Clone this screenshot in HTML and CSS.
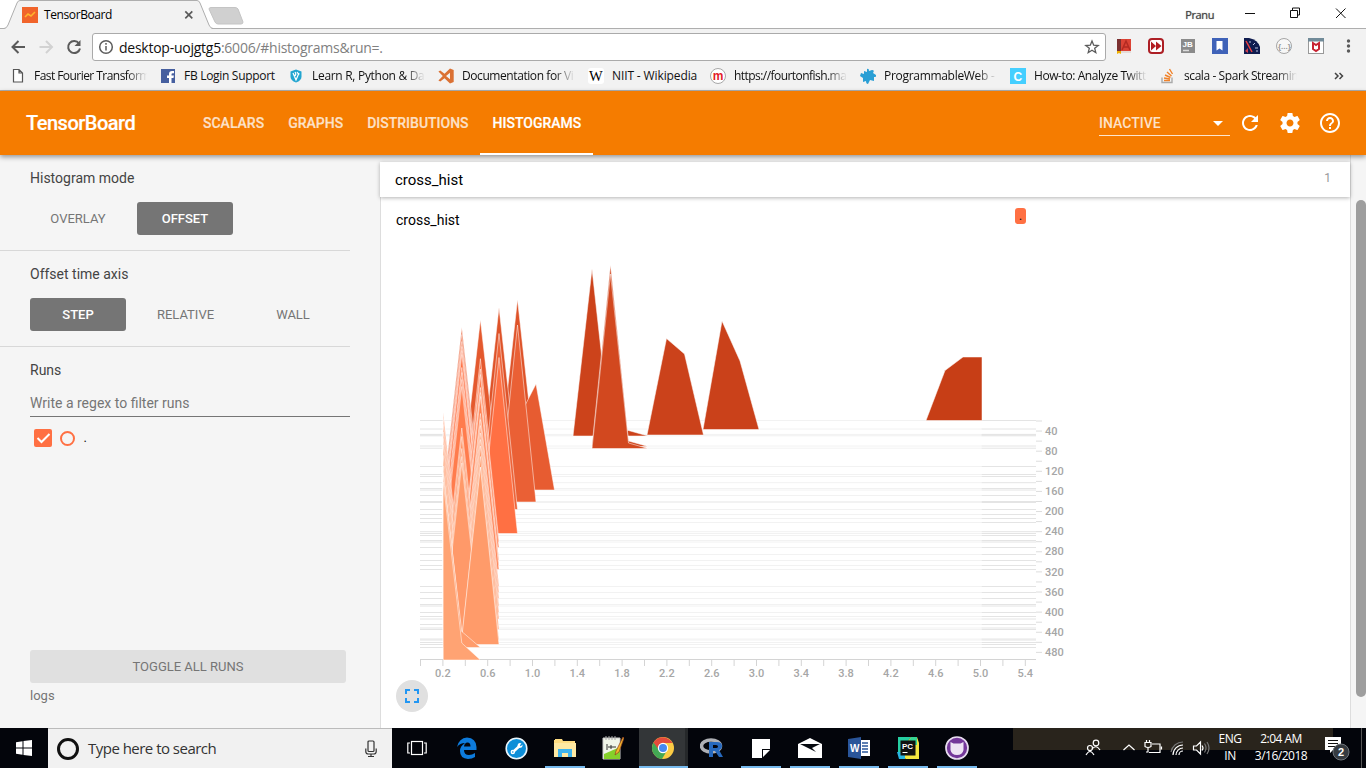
FILE: index.html
```html
<!DOCTYPE html>
<html lang="en">
<head>
<meta charset="utf-8">
<title>TensorBoard</title>
<link rel="stylesheet" href="styles.css">
</head>
<body>
<div class="screen">
  <div class="tabstrip">
    <svg class="tab-shape" width="260" height="29" viewBox="0 0 260 29"><path d="M0 28.5H5Q7 28 8 25L17 3Q18 .5 20 .5H197Q199 .5 200 3L209 25Q210 28.500 212 28.500V29H0Z" fill="#f2f2f2"/><path d="M0 28.500H4Q6.500 28.500 8 25L17 3Q18 .5 20 .5H197Q199 .5 200 3L209 25Q210.500 28.500 213 28.500H260" fill="none" stroke="#aeaeae"/><path d="M211 7.500H235Q237 7.500 238 9L243 22Q243 24 241 24H218Q216 24 215 22L209 9Q209 7.500 211 7.500Z" fill="#d0d0d0" stroke="#c4c4c4"/></svg>
    <div class="tab">
      <svg width="16" height="16" viewBox="0 0 16 16"><rect width="16" height="16" fill="#f1642b"/><path d="M3 10l3-3 3 2 4-4" fill="none" stroke="#ffb52e" stroke-width="1.600"/></svg>
      <span class="tab-title">TensorBoard</span>
      <svg width="10" height="10" viewBox="0 0 10 10"><path d="M1.300 1.300l7 7M8.300 1.300l-7 7" stroke="#5a5a5a" stroke-width="1.700"/></svg>
    </div>
    <div class="winctl">
      <span class="user">Pranu</span>
      <svg width="130" height="28" viewBox="0 0 130 28" fill="none" stroke="#111"><path d="M18 13.500h10M63.500 10.500h7v7h-7zM65.500 10v-2h7v7h-2M109 8.500l9.500 9.500M118.500 8.500l-9.500 9.500"/></svg>
    </div>
  </div>

  <div class="toolbar">
    <svg class="nav" width="92" height="32" viewBox="0 0 92 32" fill="none" stroke="#5a5a5a" stroke-width="2"><path d="M25 16H12.500M18.500 10l-6 6 6 6"/><path d="M39.500 16H52M46 10l6 6-6 6" stroke="#d2d2d2"/><path d="M79 12.500A6 6 0 1 0 80 17.500"/><path d="M80.500 9v6h-6z" fill="#5a5a5a" stroke="none"/></svg>
    <div class="omnibox">
      <svg width="16" height="16" viewBox="0 0 16 16" fill="none" stroke="#5c5c5c" stroke-width="1.500"><circle cx="8" cy="8" r="6.300"/><path d="M8 7v4.500M8 4v1.700"/></svg>
      <span class="url"><b>desktop-uojgtg5</b>:6006/#histograms&amp;run=.</span>
      <svg class="star" width="16" height="16" viewBox="0 0 16 16"><path d="M8 2l1.700 4.200 4.500.3-3.500 2.800 1.100 4.400L8 11.300l-3.800 2.400 1.100-4.400L1.800 6.500l4.500-.3z" fill="none" stroke="#5a5a5a" stroke-width="1.300"/></svg>
    </div>
    <svg class="exts" width="258" height="32" viewBox="0 0 258 32">
      <rect x="9" y="8" width="14" height="14" fill="#dc4335"/><path d="M9 8h4v14H9z" fill="#7b3030"/><path d="M9 20h14v2H9z" fill="#e5dcd8"/><path d="M9 20h4v3l-2-1-2 1z" fill="#efb000"/><path d="M14 19l4-9 4 9M15.500 16h5" stroke="#b32a22" fill="none" stroke-width="1.500"/>
      <rect x="41" y="8" width="14" height="14" rx="3" fill="#fff" stroke="#ad1f25" stroke-width="2"/><path d="M43 10.500l5 4.500-5 4.500zM48 10.500l5.500 4.500-5.500 4.500z" fill="#b31d22"/>
      <rect x="73" y="8" width="14" height="14" fill="#8b8b8b"/><text x="74.500" y="16" font-size="8" class="lb" fill="#fff">JB</text><path d="M75 19.500h6" stroke="#ddd" stroke-width="1.500"/>
      <rect x="104" y="7" width="16" height="16" fill="#3f62b8"/><path d="M108.500 10h6v9.500l-3-2-3 2z" fill="#fff"/>
      <path d="M136 7h5q9 2 11 9v7h-16z" fill="#101c4f"/><path d="M138 10l6 11" stroke="#ef4141" stroke-width="1.500"/><path d="M142 10v2M147 12l-2 2M150 17h-3M148 20h2" stroke="#b8c2e2"/><path d="M137 20l3-3v5z" fill="#d04050"/>
      <circle cx="176" cy="15" r="7.500" fill="#f7f7f7" stroke="#a6a6a6"/><text x="170" y="17.500" font-size="8" fill="#999" class="lb">{...}</text>
      <rect x="200.500" y="7.500" width="15" height="15" fill="#fff" stroke="#999"/><path d="M200 7h16v3.500h-16z" fill="#718b99"/><path d="M205 12v6l3 2 3-2v-6l-3 2z" fill="none" stroke="#c72332" stroke-width="2"/>
      <g fill="#5a5a5a"><circle cx="240.500" cy="10" r="1.700"/><circle cx="240.500" cy="15" r="1.700"/><circle cx="240.500" cy="20" r="1.700"/></g>
    </svg>
  </div>

  <div class="bookmarks">
    <div class="bm w1"><svg width="16" height="16" viewBox="0 0 16 16"><path d="M3.500 1.500h5.500l3.500 3.500v9h-9zM9 1.500v3.500h3.500" fill="#fff" stroke="#555" stroke-width="1.200"/></svg><span>Fast Fourier Transform</span></div>
    <div class="bm w2"><svg width="16" height="16" viewBox="0 0 16 16"><rect x="1" y="1" width="14" height="14" fill="#465f9f"/><path d="M9 15v-5H7V7.500h2V6q0-3 3-3h2v2.200h-1.300q-1.200 0-1.200 1.200v1.100h2.400L13.500 10h-2v5" fill="#fff"/></svg><span>FB Login Support</span></div>
    <div class="bm w3"><svg width="16" height="16" viewBox="0 0 16 16"><path d="M8 1.500l5.500 2v5q0 4-5.500 6-5.500-2-5.500-6v-5z" fill="#22a5d0"/><path d="M5 5l3 7 3-7M7 4q2 3-1 4M9 4l2 3" stroke="#fff" fill="none" stroke-width="1.200"/></svg><span>Learn R, Python &amp; Da</span></div>
    <div class="bm w4"><svg width="16" height="16" viewBox="0 0 16 16"><path d="M12 .5L15.700 2v12L12 15.500 6.500 10.300 2.300 13.500.4 12.600 4.800 8 .4 3.400 2.300 2.500 6.500 5.700zM12 4.700L8 8l4 3.300z" fill="#db7133" fill-rule="evenodd"/></svg><span>Documentation for Vi</span></div>
    <div class="bm w5"><svg width="16" height="16" viewBox="0 0 16 16"><rect width="16" height="16" rx="3" fill="#fff"/><text x="1" y="13" font-size="14.500" class="serif">W</text></svg><span>NIIT - Wikipedia</span></div>
    <div class="bm w6"><svg width="16" height="16" viewBox="0 0 16 16"><circle cx="8" cy="8" r="7.500" fill="#fff" stroke="#a7a7a7"/><text x="2.700" y="12" font-size="12" class="lb" fill="#e31b2b">m</text></svg><span>https://fourtonfish.ma</span></div>
    <div class="bm w7"><svg width="16" height="16" viewBox="0 0 16 16"><path d="M7 1q2-1 2 2l3-1q3 0 1 3l3 2q1 2-2 2v4l-4-1-2 4q-2 0-2-3l-3 1v-4L0 8l1-3 3 1V3l3 1z" fill="#2a9fd5"/></svg><span>ProgrammableWeb -</span></div>
    <div class="bm w8"><svg width="16" height="16" viewBox="0 0 16 16"><rect width="16" height="16" fill="#45cfff"/><text x="3.500" y="12.500" font-size="12" class="lb" fill="#fff">C</text></svg><span>How-to: Analyze Twitt</span></div>
    <div class="bm w9"><svg width="16" height="16" viewBox="0 0 16 16" fill="none"><path d="M2 9.500v5h10v-5" stroke="#aaa" stroke-width="1.400"/><path d="M4 12.500h6M4 10l6 1M5 7l5.500 2.500M7 4l4.500 4M9.500 1l3 5" stroke="#f0822a" stroke-width="1.400"/></svg><span>scala - Spark Streamin</span></div>
    <svg class="more" width="10" height="8" viewBox="0 0 10 8"><path d="M1 1l3 3-3 3M5.500 1l3 3-3 3" fill="none" stroke="#444" stroke-width="1.500"/></svg>
  </div>

  <header class="app-header">
    <div class="brand">TensorBoard</div>
    <nav class="tabs"><span>SCALARS</span><span>GRAPHS</span><span>DISTRIBUTIONS</span><span class="active">HISTOGRAMS</span></nav>
    <div class="inactive"><span>INACTIVE</span><svg width="24" height="24" viewBox="0 0 24 24"><path d="M7 10l5 5 5-5z" fill="#fff"/></svg></div>
    <div class="actions">
      <svg width="24" height="24" viewBox="0 0 24 24"><path d="M17.650 6.350C16.200 4.900 14.210 4 12 4c-4.420 0-7.990 3.580-7.990 8s3.570 8 7.990 8c3.730 0 6.840-2.550 7.730-6h-2.080c-.82 2.330-3.040 4-5.650 4-3.310 0-6-2.690-6-6s2.690-6 6-6c1.660 0 3.140.69 4.220 1.780L13 11h7V4l-2.350 2.350z"/></svg>
      <svg width="24" height="24" viewBox="0 0 24 24"><path d="M19.430 12.980c.04-.32.07-.64.07-.98s-.03-.66-.07-.98l2.110-1.650c.19-.15.24-.42.12-.64l-2-3.460c-.12-.22-.39-.3-.61-.22l-2.490 1c-.52-.4-1.080-.73-1.690-.98l-.38-2.650C14.460 2.180 14.250 2 14 2h-4c-.25 0-.46.18-.49.42l-.38 2.650c-.61.25-1.170.59-1.690.98l-2.490-1c-.23-.09-.49 0-.61.22l-2 3.460c-.13.22-.07.49.12.64l2.110 1.650c-.04.32-.07.65-.07.98s.03.66.07.98l-2.110 1.650c-.19.15-.24.42-.12.64l2 3.460c.12.22.39.3.61.22l2.490-1c.52.4 1.080.73 1.690.98l.38 2.650c.03.24.24.42.49.42h4c.25 0 .46-.18.49-.42l.38-2.650c.61-.25 1.170-.59 1.690-.98l2.490 1c.23.09.49 0 .61-.22l2-3.460c.12-.22.07-.49-.12-.64l-2.110-1.650zM12 15.500c-1.930 0-3.500-1.570-3.500-3.500s1.570-3.500 3.500-3.500 3.500 1.570 3.500 3.500-1.570 3.500-3.500 3.500z"/></svg>
      <svg width="24" height="24" viewBox="0 0 24 24"><path d="M11 18h2v-2h-2v2zm1-16C6.480 2 2 6.480 2 12s4.480 10 10 10 10-4.480 10-10S17.520 2 12 2zm0 18c-4.410 0-8-3.590-8-8s3.590-8 8-8 8 3.590 8 8-3.590 8-8 8zm0-14c-2.210 0-4 1.790-4 4h2c0-1.100.9-2 2-2s2 .9 2 2c0 2-3 1.750-3 5h2c0-2.250 3-2.500 3-5 0-2.210-1.790-4-4-4z"/></svg>
    </div>
  </header>

  <main class="content">
    <aside class="sidebar">
      <section class="mode"><h3>Histogram mode</h3><div class="choices"><span>OVERLAY</span><span class="on">OFFSET</span></div></section>
      <section class="axis"><h3>Offset time axis</h3><div class="choices"><span class="on">STEP</span><span>RELATIVE</span><span>WALL</span></div></section>
      <section class="runs"><h3>Runs</h3>
        <div class="filter">Write a regex to filter runs</div>
        <div class="run"><svg width="18" height="18" viewBox="0 0 18 18"><rect width="18" height="18" rx="2" fill="#ff7043"/><path d="M3.500 9l4 4 8-8" fill="none" stroke="#fff" stroke-width="2"/></svg><i class="ring"></i><span>.</span></div>
        <div class="toggle">TOGGLE ALL RUNS</div>
        <div class="logs">logs</div>
      </section>
    </aside>
    <div class="pane">
      <div class="card-head"><span>cross_hist</span><span class="count">1</span></div>
      <div class="card">
        <div class="chart-head"><span>cross_hist</span><span class="badge">.</span></div>
        <svg id="chart" class="chart" width="680" height="450" viewBox="396 236 680 450"></svg>
        <div class="expand"><svg width="14" height="14" viewBox="0 0 14 14"><path d="M1 5V1h4M9 1h4v4M13 9v4H9M5 13H1V9" fill="none" stroke="#2196f3" stroke-width="2"/></svg></div>
      </div>
    </div>
    <div class="gutter"><div class="thumb"></div></div>
  </main>

  <footer class="taskbar">
    <div class="start"><svg width="16" height="16" viewBox="0 0 16 16"><path d="M0 2.200L6.500 1.300V7.500H0zM7.500 1.100L16 0V7.500H7.500zM0 8.500h6.500v6.200L0 13.800zM7.500 8.500H16V16l-8.500-1.100z" fill="#fff"/></svg></div>
    <div class="search"><i class="cortana"></i><span>Type here to search</span><svg width="12" height="18" viewBox="0 0 12 18" fill="none" stroke="#333" stroke-width="1.200"><rect x="3" y="1" width="6" height="10.500" rx="1"/><path d="M.8 8.500v3q0 2.500 2.500 2.500h5.400q2.500 0 2.500-2.500v-3M6 14v2.500M3 16.500h6"/></svg></div>
    <div class="slot"><svg width="20" height="16" viewBox="0 0 20 16" fill="none" stroke="#fff" stroke-width="1.200"><rect x="4.500" y="1.500" width="11" height="13"/><path d="M3 3H.8v10H3M17 3h2.200v10H17"/></svg></div>
    <div class="slot"><svg width="22" height="22" viewBox="0 0 22 22"><path d="M1 10Q3 1 11 0.500Q20 1 20.500 10V13H8Q8 18 13 18Q16 18 19 16V20Q16 22 12 22Q4 21.500 4 14Q4 9 9 6Q4 6 1 10ZM8 9.500H14.500Q14.500 5.500 11.500 5.500Q8.500 5.800 8 9.500Z" fill="#0d7bdc" fill-rule="evenodd"/></svg></div>
    <div class="slot"><svg width="23" height="23" viewBox="0 0 23 23"><circle cx="11.500" cy="11.500" r="10.300" fill="#0c8ed8" stroke="#eaf6fd" stroke-width="1.600"/><path d="M8 15l6-5.500" stroke="#fff" stroke-width="2.400"/><circle cx="7.800" cy="15" r="2.200" fill="#fff"/><circle cx="7.800" cy="15" r=".8" fill="#0c8ed8"/><path d="M13 7q1.500-1.500 3.500-.5l-1.700 1.700 1 1 1.700-1.700q.5 3.500-3.500 3.500-2.500-1-1-4" fill="#fff"/></svg></div>
    <div class="slot run-on"><svg width="22" height="20" viewBox="0 0 22 20"><path d="M0 2h1V1h7l1 2h12v16H0z" fill="#ffdd82"/><path d="M0 5h22v14H0z" fill="#ffe9a2"/><path d="M4 11h14v8h-4v-4H8v4H4z" fill="#3fb4ed"/></svg></div>
    <div class="slot npp"><svg width="22" height="26" viewBox="0 0 22 26"><path d="M1 3h17v21H1z" fill="#f0f5e9" stroke="#ccc"/><path d="M2 19l16-7v12H2z" fill="#85d12a"/><path d="M4 1v4M7 1v4M10 1v4M13 1v4" stroke="#aaa"/><path d="M5 9v6M9 10v4M6 12h8" stroke="#333"/><path d="M21 2l-7 14-1 4 4-3 5-14z" fill="#f3b62d" stroke="#8f3f1f" stroke-width=".7"/></svg></div>
    <div class="slot chrome-slot run-on"><svg width="22" height="22" viewBox="0 0 22 22"><circle cx="11" cy="11" r="11" fill="#fbcb44"/><path d="M11 11L1.500 5.500A11 11 0 0 0 10 22l5-8.500z" fill="#43a854"/><path d="M1.500 5.500A11 11 0 0 1 20.500 6H11L7 13z" fill="#e44b3c"/><circle cx="11" cy="11" r="5.200" fill="#fff"/><circle cx="11" cy="11" r="4" fill="#4688f1"/></svg></div>
    <div class="slot"><svg width="24" height="20" viewBox="0 0 24 20"><ellipse cx="11" cy="8" rx="9.500" ry="6" fill="none" stroke="#aeb0b5" stroke-width="3.500"/><path d="M9 4h8q5 0 5 4 0 3-3 4l4 7h-4l-4-6h-2v6H9zm4 3v3h3q2 0 2-1.500T16 7z" fill="#2769bd" fill-rule="evenodd"/></svg></div>
    <div class="slot run-on"><svg width="18" height="19" viewBox="0 0 18 19"><path d="M0 0h18v10h-8v9H0zM11 18v-7h7z" fill="#fff"/></svg></div>
    <div class="slot run-on"><svg width="24" height="20" viewBox="0 0 24 20"><path d="M0 6l12-6 12 6v14H0z" fill="#fff"/><path d="M2 6h20l-8 4 4 4-6-3z" fill="#060910"/></svg></div>
    <div class="slot run-on"><svg width="22" height="22" viewBox="0 0 22 22"><path d="M12 3h10v16H12z" fill="#fff"/><path d="M14 6h6M14 9h6M14 12h6M14 15h6" stroke="#2b579a" stroke-width="1.400"/><path d="M0 2l13-2v22L0 20z" fill="#2a5599"/><text x="2" y="15" font-size="10" class="lb" fill="#fff">W</text></svg></div>
    <div class="slot run-on"><svg width="22" height="22" viewBox="0 0 22 22"><path d="M1 0h13L1 18z" fill="#26cfa2"/><path d="M14 0h6l2 6v16H9L1 18z" fill="#f5e640"/><path d="M14 0h6v8H10z" fill="#36d493"/><path d="M0 15h8v7H2z" fill="#28b6e3"/><rect x="3.500" y="3.500" width="15" height="15" fill="#111"/><text x="5" y="11.500" font-size="8" class="lb" fill="#fff">PC</text><path d="M5.500 15.500h5" stroke="#fff"/></svg></div>
    <div class="slot run-on"><svg width="24" height="26" viewBox="0 0 24 26"><circle cx="12" cy="13" r="11" fill="#74389a" stroke="#e8def0" stroke-width="1.700"/><path d="M5.500 7l3 1.500h7l3-1.500v8q-1 5-6.500 5t-6.500-5z" fill="#eee4f4"/></svg></div>
    <div class="tray">
      <svg class="tray-icons" width="130" height="40" viewBox="1080 728 130 40" fill="none" stroke="#fff" stroke-width="1.200"><circle cx="1096" cy="743" r="2.800"/><path d="M1092 749q4-5 8 1"/><circle cx="1090" cy="748" r="2.500"/><path d="M1086 755q4-7 8 0M1123.500 750l5.500-5 5.500 5"/><path d="M1152 744h8v8.500h-11M1161.500 746.500v3M1145 742.500h6v4q-3 2-6 0zM1146.500 740v2M1149.500 740v2M1148 748v4h-2"/><path d="M1173 755a10 10 0 0 1 10-10M1176 755a7 7 0 0 1 7-7M1179 755a4 4 0 0 1 4-4" /><path d="M1171 752a12 12 0 0 1 12-10" stroke="#777"/><path d="M1193.500 746h3l4-4v12l-4-4h-3zM1202 745.500q2 2.500 0 5"/><path d="M1204.500 743.500q3 4.500 0 9M1207 742q4 6 0 12" stroke="#777"/></svg>
      <div class="lang">ENG<br>IN</div>
      <div class="clock">2:04 AM<br>3/16/2018</div>
      <svg class="notice" width="32" height="30" viewBox="1322 736 32 30"><path d="M1325 740h16v13h-8l-3 3v-3h-5z" fill="#fff"/><path d="M1328 743.500h10M1328 746.500h10M1328 749.500h7" stroke="#111"/><circle cx="1341" cy="755" r="8" fill="#363b40" stroke="#70757b"/><text x="1338" y="759" font-size="11" class="lb" fill="#fff">2</text></svg>
    </div>
  </footer>
</div>
<script src="chart.js"></script>
</body>
</html>
```
FILE: styles.css
```css
* { box-sizing: border-box; }
body { margin: 0; background: #fff; font-family: Roboto, sans-serif; overflow: hidden; }
.screen { width: 1366px; height: 768px; display: flex; flex-direction: column; overflow: hidden; }
svg { display: block; flex: none; }
.lb { font-family: "Liberation Sans", sans-serif; font-weight: bold; stroke: none; }
.serif { font-family: "Liberation Serif", serif; }

.tabstrip { height: 29px; flex: none; position: relative; display: flex; justify-content: space-between; border-bottom: 1px solid #aeaeae; font: 12px "Open Sans", sans-serif; }
.tab-shape { position: absolute; left: 0; top: 0; }
.tab { position: relative; width: 194px; padding: 1px 0 0 22px; display: flex; align-items: center; }
.tab-title { margin-left: 6px; flex: 1; letter-spacing: -.4px; }
.winctl { display: flex; align-items: center; padding-right: 9px; }
.user { font-size: 11px; color: #444; letter-spacing: -.4px; margin-right: 13px; text-shadow: 0 0 1px #777; }

.toolbar { height: 34px; flex: none; background: #f2f2f2; display: flex; padding: 2px 0 0; }
.omnibox { width: 1014px; height: 28px; margin-top: 2px; border: 1px solid #aaa; border-radius: 3px; background: #fff; display: flex; align-items: center; padding: 0 5px; }
.url { margin-left: 5px; flex: 1; font: 14px "Open Sans", sans-serif; letter-spacing: -.25px; color: #808080; }
.url b { font-weight: normal; color: #111; }
.exts { margin-left: 2px; }

.bookmarks { height: 28px; flex: none; background: #f2f2f2; border-bottom: 1px solid #b0b0b0; display: flex; align-items: center; padding: 0 0 2px 10px; }
.bm { display: flex; align-items: center; gap: 8px; }
.bm span { flex: 1; overflow: hidden; white-space: nowrap; font: 12px "Open Sans", sans-serif; letter-spacing: -.3px; color: #111; -webkit-mask-image: linear-gradient(90deg, #000 82%, transparent); }
.bm.w2 span, .bm.w5 span { -webkit-mask-image: none; }
.bm.w1 span, .bm.w6 span { letter-spacing: -.55px; }
.bm.w5 span { letter-spacing: -.12px; }
.bm.w4 span, .bm.w8 span, .bm.w9 span { letter-spacing: -.42px; }
.w1 { width: 137px; margin-right: 13px; } .w2 { width: 117px; margin-right: 11px; } .w3 { width: 137px; margin-right: 13px; }
.w4 { width: 137px; margin-right: 13px; } .w5 { width: 111px; margin-right: 11px; } .w6 { width: 137px; margin-right: 13px; }
.w7 { width: 137px; margin-right: 13px; } .w8 { width: 137px; margin-right: 13px; } .w9 { width: 137px; }
.more { margin-left: auto; margin-right: 22px; }

.app-header { height: 64px; flex: none; background: #f57c00; color: #fff; display: flex; align-items: center; padding: 0 24px 0 26px; box-shadow: 0 2px 5px rgba(0,0,0,.4); position: relative; z-index: 2; }
.brand { width: 165px; font-size: 20px; font-weight: 500; letter-spacing: -.5px; -webkit-text-stroke: .2px; }
.tabs { display: flex; height: 64px; font-size: 14px; font-weight: 500; line-height: 64px; color: rgba(255,255,255,.75); }
.tabs span { padding: 0 12px; -webkit-text-stroke: .2px; }
.tabs .active { color: #fff; border-bottom: 2px solid #fff; margin-left: -1px; padding-left: 13px; }
.inactive { width: 131px; margin-left: auto; height: 26px; border-bottom: 1px solid rgba(255,255,255,.8); display: flex; justify-content: space-between; align-items: center; font-size: 14px; font-weight: 500; color: rgba(255,255,255,.8); }
.actions { display: flex; gap: 16px; margin-left: 8px; fill: #fff; }

.content { height: 573px; flex: none; display: flex; background: #f5f5f5; }
.sidebar { width: 380px; color: #444; }
.sidebar section { width: 350px; padding: 15px 0 0 30px; height: 96px; border-bottom: 1px solid #d8d8d8; }
.sidebar .runs { border: 0; height: 381px; }
h3 { margin: 0; font-size: 14px; font-weight: 400; line-height: 17px; }
.choices { display: flex; gap: 11px; margin-top: 15px; }
.choices span { width: 96px; height: 33px; line-height: 33px; text-align: center; font-size: 13px; border-radius: 3px; color: #757575; }
.choices .on { background: #757575; color: #fff; font-weight: 500; }
.axis .choices { gap: 11.5px; }
.filter { margin-top: 15px; height: 23px; line-height: 19px; font-size: 14px; color: #757575; border-bottom: 1px solid #757575; }
.run { display: flex; align-items: center; margin: 12px 0 0 4px; }
.ring { width: 15px; height: 15px; border: 2px solid #ff7043; border-radius: 50%; margin: 0 9px 0 7.5px; }
.run span { line-height: 18px; font-size: 13px; color: #111; }
.toggle { margin-top: 203px; width: 316px; height: 33px; line-height: 33px; background: #e0e0e0; border-radius: 3px; text-align: center; font-size: 13px; color: #757575; }
.logs { margin-top: 5px; font-size: 13px; line-height: 16px; color: #757575; }
.pane { width: 970px; padding-top: 7px; }
.card-head { height: 35px; background: #fff; box-shadow: 0 1px 4px rgba(0,0,0,.3); display: flex; justify-content: space-between; align-items: center; padding: 1px 19px 0 15px; font-size: 15px; color: #000; position: relative; }
.count { font-size: 12px; color: #999; padding-bottom: 4px; }
.card { height: 531px; background: #fff; border-left: 1px solid #ddd; padding: 10px 0 0 15px; }
.chart-head { display: flex; align-items: flex-start; height: 29px; font-size: 14px; }
.chart-head span:first-child { margin-top: 5px; width: 619px; }
.badge { width: 11px; height: 16px; margin-top: 1px; background: #ff7043; border-radius: 3px; text-align: center; font-size: 12px; line-height: 17px; }
.expand { width: 32px; height: 32px; margin-top: -6px; border-radius: 50%; background: #e0e0e0; display: grid; place-items: center; position: relative; }
.gutter { width: 16px; border-left: 1px solid #ddd; padding: 45px 0 0 5px; }
.thumb { height: 497px; width: 10px; background: #9e9e9e; border-radius: 5px; }
.chart text { font: 500 11px Roboto, sans-serif; fill: #a6a6a6; }

.taskbar { height: 40px; flex: none; background: #03050b; display: flex; }
.start { width: 48px; display: grid; place-items: center; }
.search { width: 344px; background: #f1f1f1; border-top: 1px solid #bbb; display: flex; align-items: center; padding: 0 15px 0 9px; }
.cortana { width: 22px; height: 22px; border: 3px solid #111; border-radius: 50%; }
.search span { flex: 1; margin-left: 9px; padding-bottom: 2px; font: 15px "Open Sans", sans-serif; letter-spacing: -.52px; color: #333; }
.slot { width: 49px; height: 40px; display: grid; place-items: center; position: relative; }
.slot:nth-child(4) { margin-left: 1.5px; }
.npp { padding-right: 2px; }
.run-on::after { content: ""; position: absolute; left: 4px; right: 4.5px; bottom: 0; height: 2px; background: #76b9ed; }
.chrome-slot { background: #333638; border-right: 3px solid #25282a; padding-left: 2px; }
.chrome-slot::after { left: 0; right: -3px; }
.tray { position: relative; margin-left: auto; width: 353px; padding-left: 67px; display: flex; align-items: center; color: #fff; background: linear-gradient(#29241c, #29241c) 0 0 / 320px 22px no-repeat; }
.tray::after { content: ""; position: absolute; right: 4px; top: 0; width: 1px; height: 40px; background: #555; }
.lang, .clock { font: 12px/17px "Open Sans", sans-serif; text-align: center; letter-spacing: -.5px; padding-bottom: 2px; }
.lang { width: 40px; }
.clock { width: 62px; }
.notice { margin-left: 10px; }
```
FILE: chart.js
```js
const NS = 'http://www.w3.org/2000/svg';
const svg = document.getElementById('chart');
function add(name, attrs, text) {
  const e = document.createElementNS(NS, name);
  for (const k in attrs) e.setAttribute(k, attrs[k]);
  if (text) e.textContent = text;
  svg.appendChild(e);
}

// baselines of every recorded step
const rows = [420.5, 429, 434.4, 435, 435.8, 446, 448.2, 466.5, 474.5, 476.5, 482.7, 488.5, 490, 495.5, 501.5, 502.5, 509.5, 514.5, 518.5, 522.5, 531.7, 533.5, 535.5, 540.5, 542, 547.5, 554.5, 560.5, 565.5, 569.5, 586.5, 592.5, 598.5, 604.5, 606, 612.5, 616.5, 619, 624.5, 628, 629.5, 639, 640, 642.5, 644.5, 647.5, 659.5];
for (const y of rows) {
  add('path', { d: `M420 ${y}H443`, stroke: '#e4e4e4' });
  add('path', { d: `M443 ${y}H981.5`, stroke: '#f2f2f2' });
  add('path', { d: `M981.5 ${y}H1036`, stroke: '#e4e4e4' });
}

const shape = (pts, fill) => add('polygon', { points: pts, fill, stroke: 'rgba(255,255,255,.5)', 'stroke-width': 1 });
shape('926,420.5 945,370.5 963,357 982,357 982,420.5', '#c73e16');
shape('703,429.500 722,321 740,361 759,429.500', '#ca411a');
shape('647,435 666.500,338.500 684.500,354 703.500,435', '#cb421b');
shape('573,436 592,269 610.500,436', '#cc431b');
shape('610,436 628.500,430.500 648,436', '#cc431b');
shape('592,446.500 610.500,265 628.500,441 648,446.500', '#d1461e');
shape('592,448.500 610.500,274 628.500,443 648,448.500', '#d2481f');

// x positions of the histogram bins
const X = [443.2, 461.8, 480.4, 499, 517.5, 536, 554.5];
const ridge = (base, heights, fill) => {
  const last = X[heights.length - 1];
  shape(`${X[0]},${base} ` + heights.map((h, i) => `${X[i]},${base - h}`).join(' ') + ` ${last},${base}`, fill);
};
ridge(466.500, [0, 0, 0, 0, 167, 0], '#de5329');
ridge(474.500, [0, 0, 0, 167, 0], '#de5329');
ridge(482.700, [0, 0, 163, 0], '#e4592e');
ridge(490, [0, 0, 0, 0, 70, 106, 0], '#e75c31');
ridge(495.500, [0, 168, 0], '#e95e33');
ridge(502, [0, 0, 0, 0, 177, 0], '#ea6035');
ridge(502.500, [0, 168, 0], '#f0663a');
ridge(509.500, [0, 0, 0, 176, 0], '#ed6338');
// narrow peaks that fall in the first, second or third bin of each later step
const steps = [
  [509.500, 1], [514.500, 1], [518.500, 1], [522.500, 1], [531.700, 2], [533.500, 3], [535.500, 1], [540.500, 1],
  [542, 2], [547.500, 2], [547.500, 1], [554.500, 1], [560.500, 2], [565.500, 2], [569.500, 2], [586.500, 2], [592.500, 2],
  [596, 1], [598.500, 2], [604.500, 1], [606, 2], [612.500, 2], [616.500, 1], [619, 2], [624.500, 1], [629.500, 2], [631, 1], [640, 2]
];
const mix = (t) => {
  const from = [255, 112, 66], to = [255, 155, 106];
  return `rgb(${from.map((c, i) => Math.round(c + (to[i] - c) * t)).join(',')})`;
};
for (const [b, k] of steps) {
  const t = Math.max(0, (b - 525) / 110);
  if (k === 3) ridge(b, [0, 0, 0, 176, 0], '#ff7043');
  else if (k === 1) ridge(b, [0, 168, 0], mix(t));
  else ridge(b, [b > 580 ? 174 : 0, 0, 173, 0], mix(t));
}
ridge(644.500, [172, 7, 177, 0], '#ff9b6a');
ridge(647.500, [172, 16, 0], '#ff9c6c');
ridge(660, [178, 17, 0], '#ffa373');

add('path', { d: 'M420 659.5H443M480 659.5H1036', stroke: '#d4d4d4' });
for (let i = 0; i < 28; i++) {
  const x = 420.5 + i * 22.4;
  add('path', { d: `M${x} 660V666`, stroke: '#d4d4d4' });
  if (i % 2) add('text', { x, y: 677, 'text-anchor': 'middle' }, (0.2 * i).toFixed(1));
}
for (let i = 0; i < 24; i++) {
  const y = 421 + i * 10.06;
  add('path', { d: `M1036 ${y}H1042`, stroke: '#ddd' });
  if (i % 2) add('text', { x: 1045, y: y + 3.7 }, 20 + i * 20);
}
```
